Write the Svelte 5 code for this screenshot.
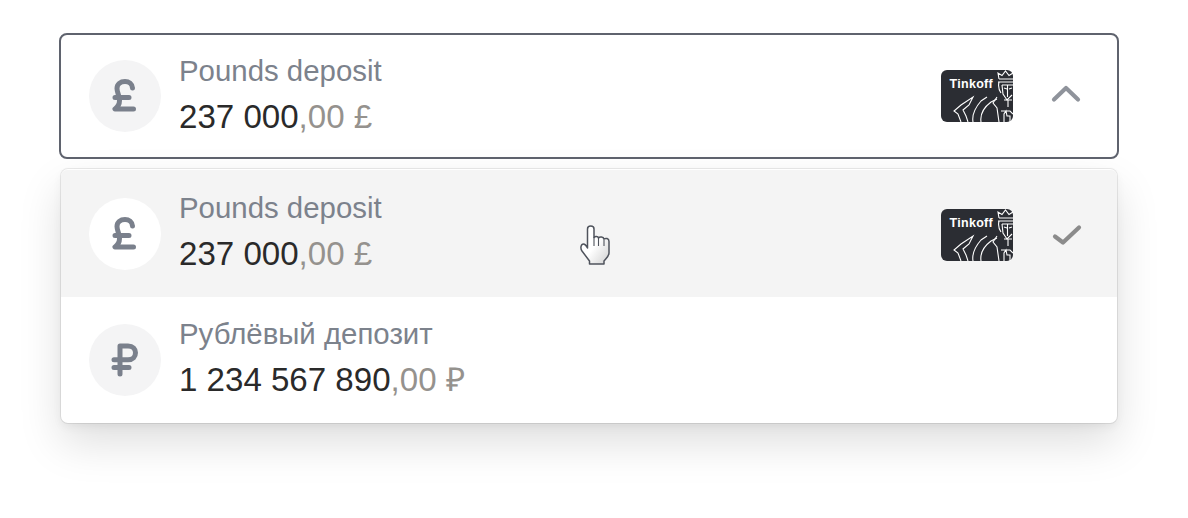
<script>
  const rows = [
    { title: 'Pounds deposit', whole: '237 000', cents: ',00 £', icon: 'pound', logo: true, hover: true },
    { title: 'Рублёвый депозит', whole: '1 234 567 890', cents: ',00 ₽', icon: 'rub', logo: false, hover: false }
  ];
</script>

{#snippet currency(kind)}
  <svg class="cur" viewBox="0 0 72 72" width="72" height="72" aria-hidden="true">
    {#if kind === 'pound'}
      <path d="M43.500 28c-.3-4.200-3.600-6.500-7.500-6.500-4.600 0-8 2.700-8 7 0 4 2.500 7.500 2.500 12 0 3.500-1.500 6.300-4.500 8.500h18.500M26 37.500h14" />
    {:else}
      <path d="M31 22v28M31 22h8c5 0 7.500 3 7.500 6.800s-2.500 7-7.500 7H25M25 43.500h15" />
    {/if}
  </svg>
{/snippet}

{#snippet logo()}
  <svg class="logo" viewBox="0 0 72 52" width="72" height="52" aria-hidden="true">
    <rect width="72" height="52" rx="6" fill="#2b2d33" />
    <text x="8.500" y="18" class="brand">Tinkoff</text>
    <g fill="none" stroke="#fff" stroke-width="1.100">
      <path d="M58 9l-1-6 4 2.500 3.500-4.500L68 5.500 72 3M58 9h14M57 12h15M58 12c-1 4 0 8 2 11M61 15h11M61 15l1 9 4 6 5-5M66.500 15v12M63 18l3 1M68 19l3-1" />
      <path d="M63 30h8M67 30v7M56 27l-4 6 4 5 2 14M60 41h9l3 3M63 52v-8l2-3 1 5h3v6" />
      <path d="M20 52l-3-8-4-3 7-6 12-8-4 8-6 5 3 6 2 6M32 52c-1-6 1-13 8-21l6-4M40 52c-1-7 2-14 10-20l6-3" />
    </g>
  </svg>
{/snippet}

{#snippet content(r, inMenu)}
  <span class="circle" class:white={inMenu && r.hover}>{@render currency(r.icon)}</span>
  <div class="text" class:tight={inMenu}>
    <div class="title">{r.title}</div>
    <div class="amount">{r.whole}<span class="cents">{r.cents}</span></div>
  </div>
{/snippet}

<main class="page">
  <button class="trigger">
    {@render content(rows[0], false)}
    <span class="end">
      {@render logo()}
      <svg class="mark" viewBox="0 0 32 32" width="32" height="32" aria-hidden="true">
        <path class="chev" d="M5 19.500L17 8l12 11.500" />
      </svg>
    </span>
  </button>

  <div class="menu">
    {#each rows as r}
      <div class="row" class:hover={r.hover}>
        {@render content(r, true)}
        {#if r.logo}
          <span class="end in-row">
            {@render logo()}
            <svg class="mark" viewBox="0 0 32 32" width="32" height="32" aria-hidden="true">
              <path class="check" d="M5 18.500l8 6L29 9.500" />
            </svg>
          </span>
        {/if}
      </div>
    {/each}
    <svg class="cursor" viewBox="0 0 32 42" width="32" height="42" aria-hidden="true">
      <defs>
        <linearGradient id="g" x1="0" y1="0" x2="1" y2="1">
          <stop offset=".5" stop-color="#fff"/>
          <stop offset="1" stop-color="#cfcfcf"/>
        </linearGradient>
      </defs>
      <path d="M7.500 24V5c0-4 6.500-4 6.500 0v8.500c1-1.500 4-1.500 4.500.5 1-1.500 5-1.500 5.500 1 1.500-1 5-1 5 2.500V29c0 3-2.500 5-5 8v3H9.500v-3L2 27c-2-3-1-7 1.500-7 2 0 3 2 4 4z" fill="url(#g)" stroke="#4f535c" stroke-width="1.500" stroke-linejoin="round"/>
      <path d="M14 13v9M18.500 14v8M24 15.500V22" stroke="#4f535c" stroke-width="1.100" fill="none"/>
    </svg>
  </div>
</main>

<style>
  :global(body) {
    margin: 0;
    background: #fff;
  }
  .page {
    width: 1188px;
    height: 518px;
    box-sizing: border-box;
    padding: 33px 69px 0 59px;
    display: flex;
    flex-direction: column;
    gap: 10px;
    font-family: "Liberation Sans", Arial, sans-serif;
  }
  .trigger {
    box-sizing: border-box;
    width: 100%;
    height: 126px;
    flex: none;
    padding: 0 36px 0 28px;
    display: flex;
    align-items: center;
    gap: 18px;
    background: #fff;
    border: 2px solid #5f636e;
    border-radius: 8px;
    font: inherit;
    text-align: left;
  }
  .menu {
    position: relative;
    margin: 0 2px;
    height: 254px;
    flex: none;
    box-sizing: border-box;
    padding: 1px 0 0;
    background: #fff;
    border-radius: 7px;
    box-shadow: 0 0 0 1px rgba(0, 0, 0, .08), 0 20px 44px rgba(0, 0, 0, .13), 0 4px 10px rgba(0, 0, 0, .05);
  }
  .row {
    box-sizing: border-box;
    height: 126px;
    padding: 0 35px 0 28px;
    display: flex;
    align-items: center;
    gap: 18px;
  }
  .row.hover {
    height: 127px;
    padding-top: 1px;
    background: #f4f4f4;
    border-radius: 6px 6px 0 0;
  }
  .circle {
    flex: none;
    width: 72px;
    height: 72px;
    border-radius: 50%;
    background: #f4f4f5;
    display: flex;
  }
  .circle.white {
    background: #fff;
  }
  .cur path {
    fill: none;
    stroke: #7a808c;
    stroke-width: 5;
    stroke-linecap: round;
    stroke-linejoin: round;
  }
  .text {
    flex: 1;
    min-width: 0;
    padding-bottom: 4px;
  }
  .text.tight {
    padding-bottom: 6px;
  }
  .title {
    font-size: 29.400px;
    line-height: 38px;
    color: #7c828c;
  }
  .amount {
    margin-top: 8px;
    font-size: 33.100px;
    line-height: 38px;
    color: #2a2a2a;
  }
  .cents {
    color: #95928e;
  }
  .end {
    flex: none;
    display: flex;
    align-items: center;
    gap: 36px;
  }
  .end.in-row {
    gap: 37px;
  }
  .in-row .logo {
    margin-top: 2px;
  }
  .logo {
    display: block;
  }
  .brand {
    font-family: "Liberation Sans", Arial, sans-serif;
    font-weight: 700;
    font-size: 12.500px;
    letter-spacing: .3px;
    fill: #fff;
  }
  .chev, .check {
    fill: none;
    stroke: #8f939b;
    stroke-width: 4.200;
    stroke-linecap: round;
    stroke-linejoin: round;
  }
  .check {
    stroke: #8b8b8b;
  }
  .cursor {
    position: absolute;
    left: 519px;
    top: 55px;
  }
</style>
